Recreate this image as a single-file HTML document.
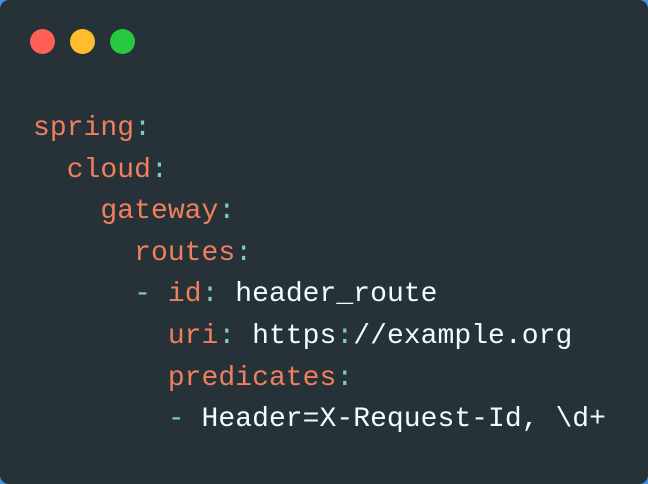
<!DOCTYPE html>
<html><head><style>
html,body{margin:0;padding:0;width:648px;height:484px;background:#4b8fe0;overflow:hidden}
.w{position:absolute;left:0;top:0;width:648px;height:484px;background:#263238;border-radius:9px}
.d{position:absolute;top:29px;width:25px;height:25px;border-radius:50%}
pre{position:absolute;left:33px;top:108px;margin:0;font-family:"Liberation Mono",monospace;font-size:28px;line-height:41.6px;color:#eeffff;letter-spacing:0.05px}
.k{color:#f07f5e}.p{color:#80cbc4}
</style></head><body><div class="w">
<div class="d" style="left:30px;background:#ff5f56"></div>
<div class="d" style="left:70px;background:#ffbd2e"></div>
<div class="d" style="left:110px;background:#27c93f"></div>
<pre><span class="k">spring</span><span class="p">:</span>
  <span class="k">cloud</span><span class="p">:</span>
    <span class="k">gateway</span><span class="p">:</span>
      <span class="k">routes</span><span class="p">:</span>
      <span class="p">-</span> <span class="k">id</span><span class="p">:</span> header_route
        <span class="k">uri</span><span class="p">:</span> https<span class="p">:</span>//example.org
        <span class="k">predicates</span><span class="p">:</span>
        <span class="p">-</span> Header=X-Request-Id, \d+</pre>
</div></body></html>
